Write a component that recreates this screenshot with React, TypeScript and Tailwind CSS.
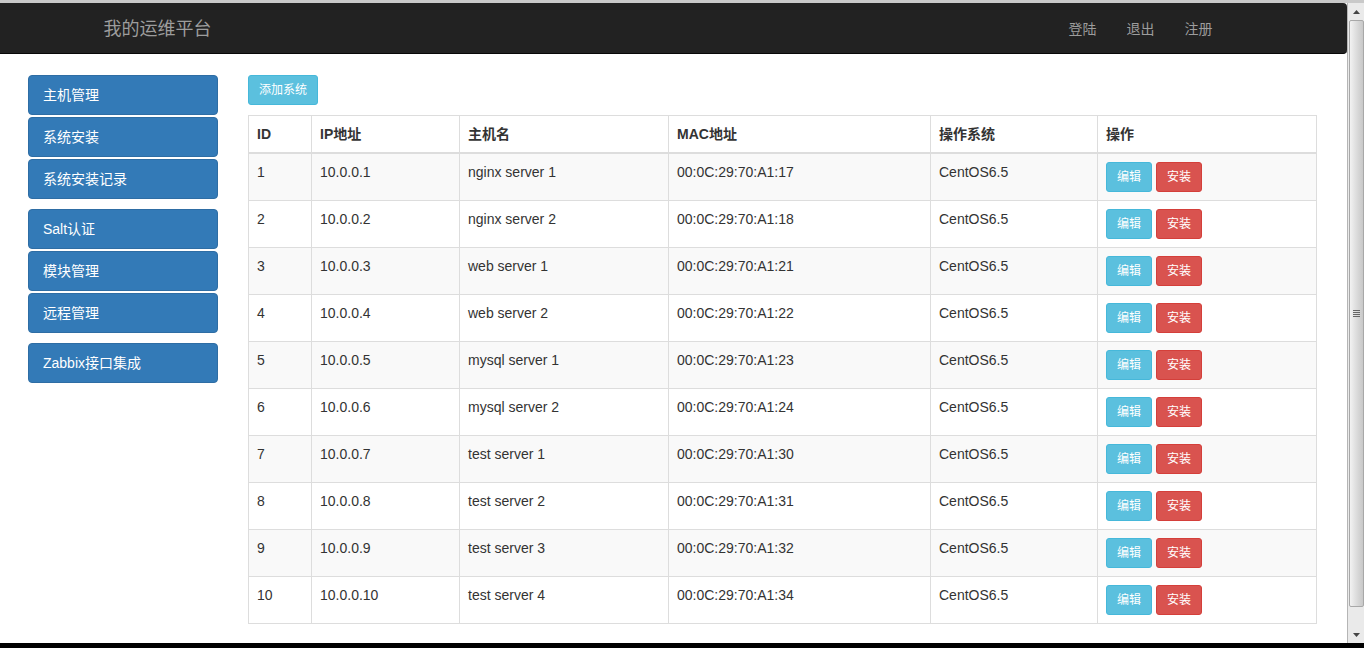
import React from 'react';

const font = { fontFamily: '"Liberation Sans", "Noto Sans CJK SC", sans-serif' };

const hosts = [
  { id: 1, ip: '10.0.0.1', name: 'nginx server 1', mac: '00:0C:29:70:A1:17' },
  { id: 2, ip: '10.0.0.2', name: 'nginx server 2', mac: '00:0C:29:70:A1:18' },
  { id: 3, ip: '10.0.0.3', name: 'web server 1', mac: '00:0C:29:70:A1:21' },
  { id: 4, ip: '10.0.0.4', name: 'web server 2', mac: '00:0C:29:70:A1:22' },
  { id: 5, ip: '10.0.0.5', name: 'mysql server 1', mac: '00:0C:29:70:A1:23' },
  { id: 6, ip: '10.0.0.6', name: 'mysql server 2', mac: '00:0C:29:70:A1:24' },
  { id: 7, ip: '10.0.0.7', name: 'test server 1', mac: '00:0C:29:70:A1:30' },
  { id: 8, ip: '10.0.0.8', name: 'test server 2', mac: '00:0C:29:70:A1:31' },
  { id: 9, ip: '10.0.0.9', name: 'test server 3', mac: '00:0C:29:70:A1:32' },
  { id: 10, ip: '10.0.0.10', name: 'test server 4', mac: '00:0C:29:70:A1:34' },
];

const menuGroups = [
  ['主机管理', '系统安装', '系统安装记录'],
  ['Salt认证', '模块管理', '远程管理'],
  ['Zabbix接口集成'],
];

const SideButton = ({ label }: { label: string }) => (
  <button className="w-[190px] h-[40px] rounded-[4px] bg-[#337ab7] border border-[#2e6da4] text-white text-[14px] text-left pl-[14px]">
    {label}
  </button>
);

const Scrollbar = () => (
  <div className="w-[17px] bg-[#eaeaea] border-l border-[#b5b5b5] flex flex-col items-center">
    <div className="h-[17px] w-full flex items-center justify-center">
      <svg width="7" height="4" viewBox="0 0 7 4"><path d="M0 4 L3.5 0 L7 4 Z" fill="#444" /></svg>
    </div>
    <div className="w-[15px] h-[587px] rounded-[2px] border border-[#a8a8a8] bg-gradient-to-r from-[#f2f2f2] via-[#dcdcdc] to-[#c8c8c8] flex items-center justify-center">
      <div className="flex flex-col gap-[1px]">
        <div className="w-[7px] h-[1px] bg-[#666]" />
        <div className="w-[7px] h-[1px] bg-[#666]" />
        <div className="w-[7px] h-[1px] bg-[#666]" />
        <div className="w-[7px] h-[1px] bg-[#666]" />
      </div>
    </div>
    <div className="flex-1" />
    <div className="h-[17px] w-full flex items-center justify-center">
      <svg width="7" height="4" viewBox="0 0 7 4"><path d="M0 0 L3.5 4 L7 0 Z" fill="#444" /></svg>
    </div>
  </div>
);

const App: React.FC = () => {
  return (
    <div className="w-[1364px] h-[648px] flex flex-col overflow-hidden bg-white text-[#333]" style={font}>
      <div className="h-[3px] bg-[#c9c9c9]" />
      <div className="flex-1 flex min-h-0">
        <div className="flex-1 flex flex-col min-w-0">
          <nav className="h-[51px] pt-[2px] bg-[#222] border-b border-[#080808] rounded-r-[4px] flex items-center">
            <div className="w-[1140px] mx-auto flex items-center justify-between">
              <span className="text-[18px] text-[#9d9d9d]">我的运维平台</span>
              <div className="flex pr-[16px] text-[14px] text-[#9d9d9d]">
                <span className="px-[15px]">登陆</span>
                <span className="px-[15px]">退出</span>
                <span className="px-[15px]">注册</span>
              </div>
            </div>
          </nav>
          <div className="flex pt-[21px] pl-[28px] pr-[29px] gap-[30px]">
            <aside className="flex flex-col gap-[10px]">
              {menuGroups.map((group, gi) => (
                <div key={gi} className="flex flex-col gap-[2px]">
                  {group.map(label => <SideButton key={label} label={label} />)}
                </div>
              ))}
            </aside>
            <main className="flex-1">
              <button className="h-[30px] w-[70px] rounded-[3px] bg-[#5bc0de] border border-[#46b8da] text-white text-[12px]">
                添加系统
              </button>
              <table className="mt-[10px] w-[1069px] border-collapse border border-[#ddd] text-[14px] leading-[20px]">
                <thead>
                  <tr className="text-left">
                    <th className="w-[63px] p-[8px] border border-[#ddd] border-b-2 font-bold">ID</th>
                    <th className="w-[148px] p-[8px] border border-[#ddd] border-b-2 font-bold">IP地址</th>
                    <th className="w-[209px] p-[8px] border border-[#ddd] border-b-2 font-bold">主机名</th>
                    <th className="w-[262px] p-[8px] border border-[#ddd] border-b-2 font-bold">MAC地址</th>
                    <th className="w-[167px] p-[8px] border border-[#ddd] border-b-2 font-bold">操作系统</th>
                    <th className="p-[8px] border border-[#ddd] border-b-2 font-bold">操作</th>
                  </tr>
                </thead>
                <tbody>
                  {hosts.map((h, i) => (
                    <tr key={h.id} className={i % 2 === 0 ? 'bg-[#f9f9f9]' : 'bg-white'}>
                      <td className="p-[8px] align-top border border-[#ddd]">{h.id}</td>
                      <td className="p-[8px] align-top border border-[#ddd]">{h.ip}</td>
                      <td className="p-[8px] align-top border border-[#ddd]">{h.name}</td>
                      <td className="p-[8px] align-top border border-[#ddd]">{h.mac}</td>
                      <td className="p-[8px] align-top border border-[#ddd]">CentOS6.5</td>
                      <td className="p-[8px] align-top border border-[#ddd]">
                        <div className="flex gap-[4px]">
                          <button className="h-[30px] w-[46px] rounded-[3px] bg-[#5bc0de] border border-[#46b8da] text-white text-[12px]">编辑</button>
                          <button className="h-[30px] w-[46px] rounded-[3px] bg-[#d9534f] border border-[#d43f3a] text-white text-[12px]">安装</button>
                        </div>
                      </td>
                    </tr>
                  ))}
                </tbody>
              </table>
            </main>
          </div>
        </div>
        <Scrollbar />
      </div>
      <div className="h-[5px] bg-black" />
    </div>
  );
};

export default App;
